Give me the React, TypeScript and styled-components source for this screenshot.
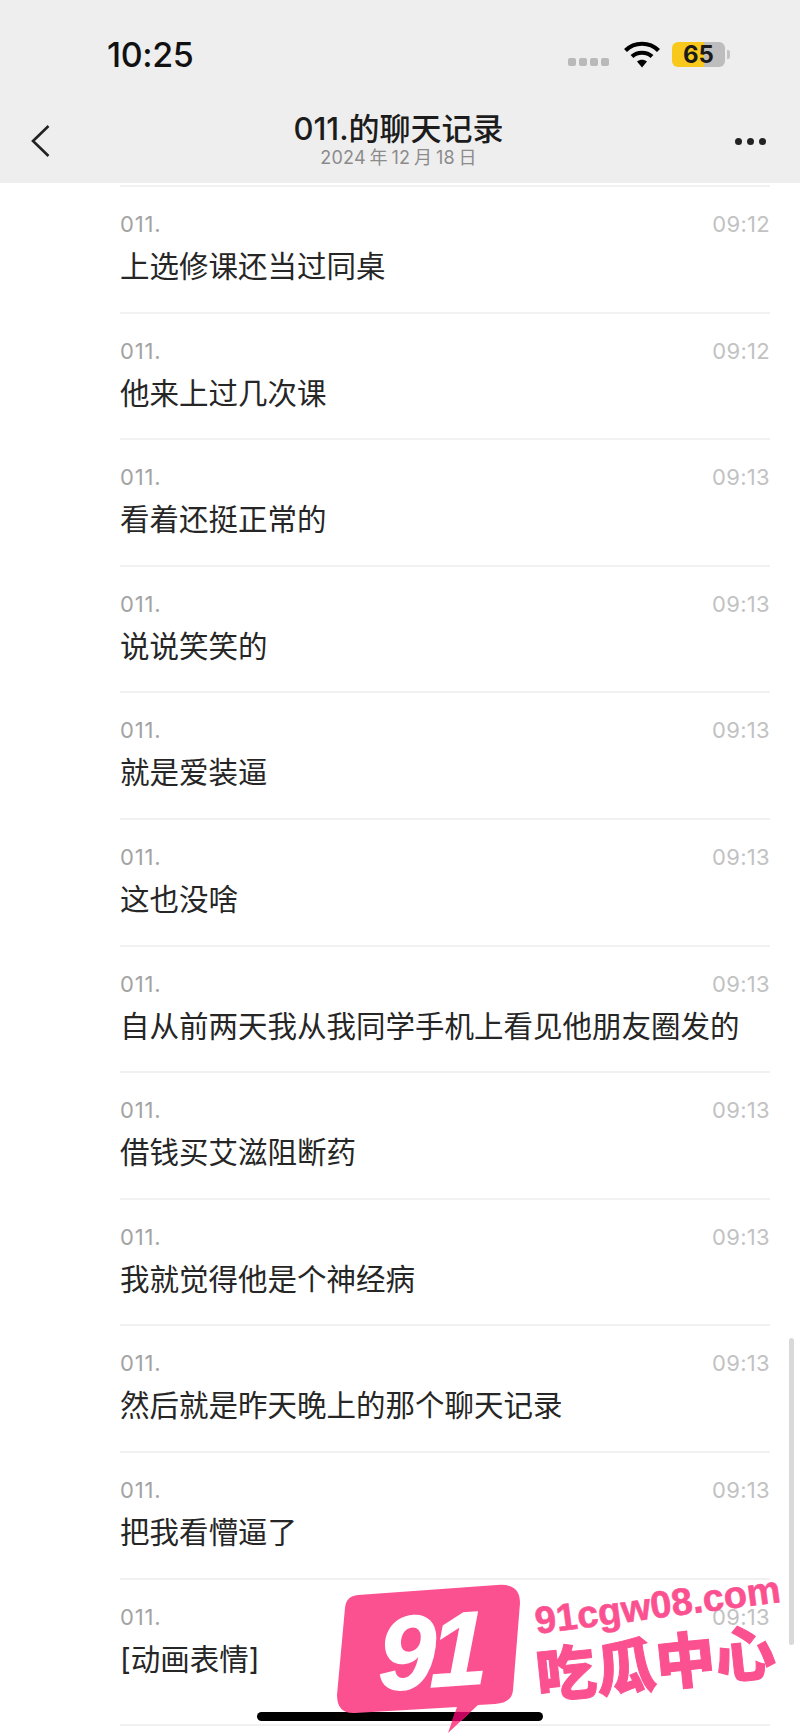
import React, { FC } from "react";
import styled, { createGlobalStyle } from "styled-components";

const GlobalStyle = createGlobalStyle`
  html, body {
    margin: 0;
    padding: 0;
    background: #ffffff;
  }
`;

const CJK = `Inter, "Noto Sans CJK SC", sans-serif`;

const StyledPage = styled.div`
  position: relative;
  width: 800px;
  height: 1736px;
  overflow: hidden;
  background: #ffffff;
  font-family: ${CJK};
`;

const StyledHeader = styled.header`
  height: 183px;
  box-sizing: border-box;
  background: #eeeeee;
  padding-top: 36px;
`;

const StyledStatusBar = styled.div`
  height: 36px;
  padding: 0 70px 0 107px;
  display: flex;
  align-items: center;
`;

const StyledClock = styled.span`
  font-size: 34px;
  font-weight: 500;
  color: #111111;
  letter-spacing: -0.4px;
`;

const StyledSignal = styled.div`
  margin-left: auto;
  margin-top: 16px;
  display: flex;
  gap: 3px;
`;

const StyledSignalDot = styled.i`
  width: 8px;
  height: 8px;
  border-radius: 2px;
  background: #b9b9b9;
`;

const StyledWifi = styled.svg`
  width: 38px;
  height: 28px;
  margin-left: 14px;
  margin-right: 11px;
`;

const StyledBattery = styled.div`
  width: 53px;
  height: 25px;
  border-radius: 6px;
  background: linear-gradient(90deg, #f8c91c 0 60%, #bdbdbd 60% 100%);
  display: flex;
  align-items: center;
  justify-content: center;
  font-size: 24px;
  font-weight: 700;
  color: #1a1a1a;
`;

const StyledBatteryNub = styled.i`
  width: 3px;
  height: 9px;
  margin-left: 2px;
  border-radius: 0 2px 2px 0;
  background: #c4c4c4;
`;

const StyledNav = styled.div`
  height: 82px;
  margin-top: 26px;
  padding: 0 34px 0 30px;
  display: flex;
  align-items: center;
  justify-content: space-between;
`;

const StyledBack = styled.svg`
  width: 22px;
  height: 34px;
  margin-top: 4px;
`;

const StyledTitleBlock = styled.div`
  display: flex;
  flex-direction: column;
  align-items: center;
  margin-left: 10px;
`;

const StyledTitle = styled.h1`
  margin: 0;
  font-size: 31px;
  line-height: 37px;
  font-weight: 500;
  color: #1c1c1c;
`;

const StyledDate = styled.div`
  font-size: 18px;
  line-height: 21px;
  color: #8b8b8b;
  letter-spacing: 0.2px;
  word-spacing: -1.5px;
`;

const StyledMore = styled.div`
  display: flex;
  gap: 5px;
  margin-top: 4px;
`;

const StyledMoreDot = styled.i`
  width: 7px;
  height: 7px;
  border-radius: 50%;
  background: #222222;
`;

const StyledList = styled.div`
  padding: 2px 30px 0 120px;
`;

const StyledRow = styled.div<{ $tall?: boolean }>`
  height: ${(p) => (p.$tall ? "146px" : "126.6px")};
  box-sizing: border-box;
  border-top: 2px solid #f1f1f1;
  padding-top: 24px;
`;

const StyledMeta = styled.div`
  display: flex;
  justify-content: space-between;
  font-size: 22px;
  line-height: 26px;
`;

const StyledName = styled.span`
  color: #a3a3a3;
  letter-spacing: 0.8px;
`;

const StyledTime = styled.span`
  color: #c2c2c2;
  letter-spacing: 0.3px;
`;

const StyledMessage = styled.div`
  margin-top: 8px;
  font-size: 29.5px;
  line-height: 42px;
  color: #262626;
  white-space: nowrap;
`;

const StyledBottomLine = styled.div`
  height: 2px;
  background: #f1f1f1;
`;

const StyledScrollbar = styled.div`
  position: absolute;
  left: 789px;
  top: 1338px;
  width: 5px;
  height: 307px;
  border-radius: 3px;
  background: #d9d9d9;
`;

const StyledHomeBar = styled.div`
  position: absolute;
  left: 257px;
  top: 1712px;
  width: 286px;
  height: 9px;
  border-radius: 5px;
  background: #000000;
`;

const StyledBubble = styled.svg`
  position: absolute;
  left: 330px;
  top: 1580px;
  width: 200px;
  height: 160px;
`;

const StyledLogoNumber = styled.span`
  position: absolute;
  left: 378px;
  top: 1590px;
  font-family: "Liberation Sans", sans-serif;
  font-size: 104px;
  line-height: 122px;
  font-weight: 700;
  font-style: italic;
  letter-spacing: -6px;
  color: #ffffff;
  -webkit-text-stroke: 1.5px #ffffff;
  transform: rotate(-4deg) skewX(-4deg);
`;

const StyledSiteUrl = styled.span`
  position: absolute;
  left: 534px;
  top: 1583px;
  font-family: "Liberation Sans", sans-serif;
  font-size: 38px;
  line-height: 44px;
  font-weight: 700;
  color: #fb5190;
  white-space: nowrap;
  -webkit-text-stroke: 0.6px #fb5190;
  transform: rotate(-7.5deg);
`;

const StyledSiteName = styled.span`
  position: absolute;
  left: 535px;
  top: 1620px;
  font-family: "Noto Sans CJK SC", sans-serif;
  font-size: 60px;
  line-height: 80px;
  font-weight: 900;
  color: #fb5190;
  white-space: nowrap;
  -webkit-text-stroke: 1px #fb5190;
  transform: rotate(-6deg);
`;

const messages = [
  { time: "09:12", text: "上选修课还当过同桌" },
  { time: "09:12", text: "他来上过几次课" },
  { time: "09:13", text: "看着还挺正常的" },
  { time: "09:13", text: "说说笑笑的" },
  { time: "09:13", text: "就是爱装逼" },
  { time: "09:13", text: "这也没啥" },
  { time: "09:13", text: "自从前两天我从我同学手机上看见他朋友圈发的" },
  { time: "09:13", text: "借钱买艾滋阻断药" },
  { time: "09:13", text: "我就觉得他是个神经病" },
  { time: "09:13", text: "然后就是昨天晚上的那个聊天记录" },
  { time: "09:13", text: "把我看懵逼了" },
  { time: "09:13", text: "[动画表情]" },
];

const App: FC = () => {
  return (
    <StyledPage>
      <GlobalStyle />
      <StyledHeader>
        <StyledStatusBar>
          <StyledClock>10:25</StyledClock>
          <StyledSignal>
            {[0, 1, 2, 3].map((n) => (
              <StyledSignalDot key={n} />
            ))}
          </StyledSignal>
          <StyledWifi viewBox="0 0 38 28">
            <g fill="none" stroke="#000000" strokeWidth="4.2">
              <path d="M2.5 10.5C11.5 1.5 26.5 1.5 35.5 10.5" />
              <path d="M9 16.5C14.5 11.5 23.5 11.5 29 16.5" />
            </g>
            <path d="M14 21.5C17 19 21 19 24 21.5L19 27.5Z" fill="#000000" />
          </StyledWifi>
          <StyledBattery>65</StyledBattery>
          <StyledBatteryNub />
        </StyledStatusBar>
        <StyledNav>
          <StyledBack viewBox="0 0 22 34">
            <path
              d="M18.5 2L3 17L18.5 32"
              fill="none"
              stroke="#222222"
              strokeWidth="2.6"
            />
          </StyledBack>
          <StyledTitleBlock>
            <StyledTitle>011.的聊天记录</StyledTitle>
            <StyledDate>2024 年 12 月 18 日</StyledDate>
          </StyledTitleBlock>
          <StyledMore>
            <StyledMoreDot />
            <StyledMoreDot />
            <StyledMoreDot />
          </StyledMore>
        </StyledNav>
      </StyledHeader>
      <StyledList>
        {messages.map((m, i) => (
          <StyledRow key={`row_${i}`} $tall={i === messages.length - 1}>
            <StyledMeta>
              <StyledName>011.</StyledName>
              <StyledTime>{m.time}</StyledTime>
            </StyledMeta>
            <StyledMessage>{m.text}</StyledMessage>
          </StyledRow>
        ))}
        <StyledBottomLine />
      </StyledList>
      <StyledScrollbar />
      <StyledHomeBar />
      <StyledBubble viewBox="0 0 200 160">
        <path
          d="M28 15L167 5Q190 3 190 23L183 110Q182 123 165 124L148 125L118 153L127 127L25 133Q7 134 7 115L15 28Q16 16 28 15Z"
          fill="#fb5190"
        />
        <path d="M125 132L140.5 132L131 141L122 141Z" fill="#c2045f" />
      </StyledBubble>
      <StyledLogoNumber>91</StyledLogoNumber>
      <StyledSiteUrl>91cgw08.com</StyledSiteUrl>
      <StyledSiteName>吃瓜中心</StyledSiteName>
    </StyledPage>
  );
};

export default App;
